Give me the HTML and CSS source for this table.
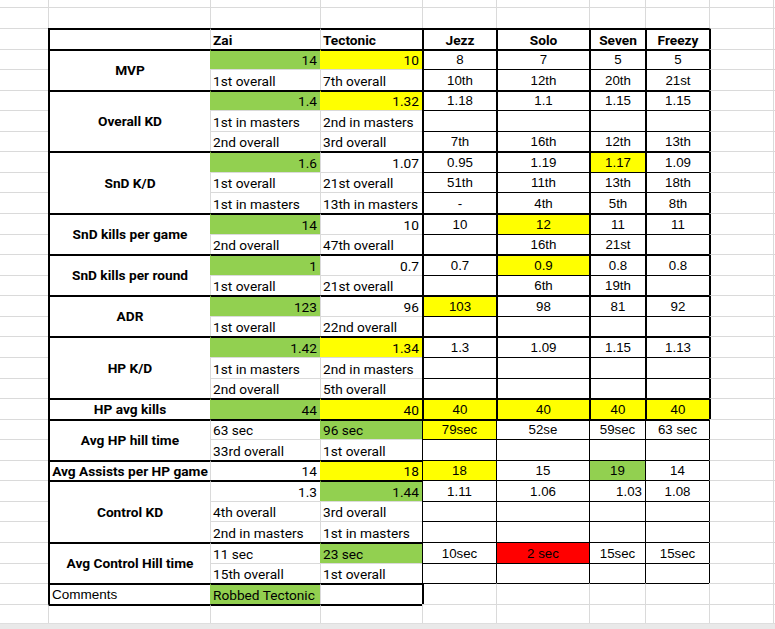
FILE: index.html
```html
<!DOCTYPE html>
<html lang="en">
<head>
<meta charset="utf-8">
<title>Player stats</title>
<link rel="stylesheet" href="styles.css">
</head>
<body>
<main class="sheet-wrap">
<table class="sheet">
<colgroup>
<col class="w-a"><col class="w-b"><col class="w-c"><col class="w-d"><col class="w-e"><col class="w-f"><col class="w-g"><col class="w-h"><col class="w-i"><col class="w-j">
</colgroup>
<tbody>
<tr class="r-top"><td class="o oa"></td><td class="o"></td><td class="o"></td><td class="o"></td><td class="o"></td><td class="o"></td><td class="o"></td><td class="o"></td><td class="o"></td><td class="o"></td></tr>
<tr><td class="o oa"></td><td class="o"></td><td class="o"></td><td class="o"></td><td class="o"></td><td class="o"></td><td class="o"></td><td class="o"></td><td class="o"></td><td class="o"></td></tr>

<tr class="gs">
<td class="o oa"></td>
<td class="lbl"></td>
<td class="p h">Zai</td>
<td class="p h">Tectonic</td>
<td class="q h">Jezz</td>
<td class="q h">Solo</td>
<td class="q h">Seven</td>
<td class="q h">Freezy</td>
<td class="o edge"></td><td class="o"></td>
</tr>

<tr class="gs">
<td class="o oa"></td>
<th class="lbl" rowspan="2" scope="rowgroup">MVP</th>
<td class="p n f green">14</td><td class="p n f yellow">10</td>
<td class="q">8</td><td class="q">7</td><td class="q">5</td><td class="q">5</td>
<td class="o edge"></td><td class="o"></td>
</tr>
<tr>
<td class="o oa"></td>
<td class="p">1st overall</td><td class="p">7th overall</td>
<td class="q">10th</td><td class="q">12th</td><td class="q">20th</td><td class="q">21st</td>
<td class="o edge"></td><td class="o"></td>
</tr>

<tr class="gs">
<td class="o oa"></td>
<th class="lbl" rowspan="3" scope="rowgroup">Overall KD</th>
<td class="p n f green">1.4</td><td class="p n f yellow">1.32</td>
<td class="q">1.18</td><td class="q">1.1</td><td class="q">1.15</td><td class="q">1.15</td>
<td class="o edge"></td><td class="o"></td>
</tr>
<tr>
<td class="o oa"></td>
<td class="p">1st in masters</td><td class="p">2nd in masters</td>
<td class="q"></td><td class="q"></td><td class="q"></td><td class="q"></td>
<td class="o edge"></td><td class="o"></td>
</tr>
<tr>
<td class="o oa"></td>
<td class="p">2nd overall</td><td class="p">3rd overall</td>
<td class="q">7th</td><td class="q">16th</td><td class="q">12th</td><td class="q">13th</td>
<td class="o edge"></td><td class="o"></td>
</tr>

<tr class="gs">
<td class="o oa"></td>
<th class="lbl" rowspan="3" scope="rowgroup">SnD K/D</th>
<td class="p n f green">1.6</td><td class="p n">1.07</td>
<td class="q">0.95</td><td class="q">1.19</td><td class="q yellow">1.17</td><td class="q">1.09</td>
<td class="o edge"></td><td class="o"></td>
</tr>
<tr>
<td class="o oa"></td>
<td class="p">1st overall</td><td class="p">21st overall</td>
<td class="q">51th</td><td class="q">11th</td><td class="q">13th</td><td class="q">18th</td>
<td class="o edge"></td><td class="o"></td>
</tr>
<tr>
<td class="o oa"></td>
<td class="p">1st in masters</td><td class="p">13th in masters</td>
<td class="q">-</td><td class="q">4th</td><td class="q">5th</td><td class="q">8th</td>
<td class="o edge"></td><td class="o"></td>
</tr>

<tr class="gs">
<td class="o oa"></td>
<th class="lbl" rowspan="2" scope="rowgroup">SnD kills per game</th>
<td class="p n f green">14</td><td class="p n">10</td>
<td class="q">10</td><td class="q yellow">12</td><td class="q">11</td><td class="q">11</td>
<td class="o edge"></td><td class="o"></td>
</tr>
<tr>
<td class="o oa"></td>
<td class="p">2nd overall</td><td class="p">47th overall</td>
<td class="q"></td><td class="q">16th</td><td class="q">21st</td><td class="q"></td>
<td class="o edge"></td><td class="o"></td>
</tr>

<tr class="gs">
<td class="o oa"></td>
<th class="lbl" rowspan="2" scope="rowgroup">SnD kills per round</th>
<td class="p n f green">1</td><td class="p n">0.7</td>
<td class="q">0.7</td><td class="q yellow">0.9</td><td class="q">0.8</td><td class="q">0.8</td>
<td class="o edge"></td><td class="o"></td>
</tr>
<tr>
<td class="o oa"></td>
<td class="p">1st overall</td><td class="p">21st overall</td>
<td class="q"></td><td class="q">6th</td><td class="q">19th</td><td class="q"></td>
<td class="o edge"></td><td class="o"></td>
</tr>

<tr class="gs">
<td class="o oa"></td>
<th class="lbl" rowspan="2" scope="rowgroup">ADR</th>
<td class="p n f green">123</td><td class="p n">96</td>
<td class="q yellow">103</td><td class="q">98</td><td class="q">81</td><td class="q">92</td>
<td class="o edge"></td><td class="o"></td>
</tr>
<tr>
<td class="o oa"></td>
<td class="p">1st overall</td><td class="p">22nd overall</td>
<td class="q"></td><td class="q"></td><td class="q"></td><td class="q"></td>
<td class="o edge"></td><td class="o"></td>
</tr>

<tr class="gs">
<td class="o oa"></td>
<th class="lbl" rowspan="3" scope="rowgroup">HP K/D</th>
<td class="p n f green">1.42</td><td class="p n f yellow">1.34</td>
<td class="q">1.3</td><td class="q">1.09</td><td class="q">1.15</td><td class="q">1.13</td>
<td class="o edge"></td><td class="o"></td>
</tr>
<tr>
<td class="o oa"></td>
<td class="p">1st in masters</td><td class="p">2nd in masters</td>
<td class="q"></td><td class="q"></td><td class="q"></td><td class="q"></td>
<td class="o edge"></td><td class="o"></td>
</tr>
<tr>
<td class="o oa"></td>
<td class="p">2nd overall</td><td class="p">5th overall</td>
<td class="q"></td><td class="q"></td><td class="q"></td><td class="q"></td>
<td class="o edge"></td><td class="o"></td>
</tr>

<tr class="gs">
<td class="o oa"></td>
<th class="lbl" scope="row">HP avg kills</th>
<td class="p n f green">44</td><td class="p n f yellow">40</td>
<td class="q yellow">40</td><td class="q yellow">40</td><td class="q yellow">40</td><td class="q yellow">40</td>
<td class="o edge"></td><td class="o"></td>
</tr>

<tr class="gs lo lo-first">
<td class="o oa"></td>
<th class="lbl" rowspan="2" scope="rowgroup">Avg HP hill time</th>
<td class="p">63 sec</td><td class="p f green">96 sec</td>
<td class="q yellow">79sec</td><td class="q">52se</td><td class="q">59sec</td><td class="q">63 sec</td>
<td class="o edge"></td><td class="o"></td>
</tr>
<tr class="lo">
<td class="o oa"></td>
<td class="p">33rd overall</td><td class="p">1st overall</td>
<td class="q"></td><td class="q"></td><td class="q"></td><td class="q"></td>
<td class="o edge"></td><td class="o"></td>
</tr>

<tr class="gs lo">
<td class="o oa"></td>
<th class="lbl" scope="row">Avg Assists per HP game</th>
<td class="p n">14</td><td class="p n f yellow">18</td>
<td class="q yellow">18</td><td class="q">15</td><td class="q green">19</td><td class="q">14</td>
<td class="o edge"></td><td class="o"></td>
</tr>

<tr class="gs lo">
<td class="o oa"></td>
<th class="lbl" rowspan="3" scope="rowgroup">Control KD</th>
<td class="p n">1.3</td><td class="p n f green">1.44</td>
<td class="q">1.11</td><td class="q">1.06</td><td class="q rt">1.03</td><td class="q">1.08</td>
<td class="o edge"></td><td class="o"></td>
</tr>
<tr class="lo">
<td class="o oa"></td>
<td class="p">4th overall</td><td class="p">3rd overall</td>
<td class="q"></td><td class="q"></td><td class="q"></td><td class="q"></td>
<td class="o edge"></td><td class="o"></td>
</tr>
<tr class="lo">
<td class="o oa"></td>
<td class="p">2nd in masters</td><td class="p">1st in masters</td>
<td class="q"></td><td class="q"></td><td class="q"></td><td class="q"></td>
<td class="o edge"></td><td class="o"></td>
</tr>

<tr class="gs lo">
<td class="o oa"></td>
<th class="lbl" rowspan="2" scope="rowgroup">Avg Control Hill time</th>
<td class="p">11 sec</td><td class="p f green">23 sec</td>
<td class="q">10sec</td><td class="q red">2 sec</td><td class="q">15sec</td><td class="q">15sec</td>
<td class="o edge"></td><td class="o"></td>
</tr>
<tr class="lo">
<td class="o oa"></td>
<td class="p">15th overall</td><td class="p">1st overall</td>
<td class="q"></td><td class="q"></td><td class="q"></td><td class="q"></td>
<td class="o edge"></td><td class="o"></td>
</tr>

<tr class="gs">
<td class="o oa"></td>
<th class="lbl note" scope="row">Comments</th>
<td class="p f green">Robbed Tectonic</td><td class="p"></td>
<td class="o cl edge"></td><td class="o cl"></td><td class="o cl"></td><td class="o cl"></td>
<td class="o"></td><td class="o"></td>
</tr>

<tr class="r-last">
<td class="o oa"></td><td class="o bt"></td><td class="o bt"></td><td class="o bt"></td><td class="o"></td><td class="o"></td><td class="o"></td><td class="o"></td><td class="o"></td><td class="o"></td>
</tr>
</tbody>
</table>
<div class="hscroll"></div>
</main>
</body>
</html>
```

FILE: styles.css
```css
:root {
  --grid: #dadada;
  --green: #92d050;
  --yellow: #ffff00;
  --red: #ff0000;
}

html, body {
  margin: 0;
  padding: 0;
  background: #fff;
  overflow: hidden;
}

body {
  font-family: Roboto, "Liberation Sans", Arial, sans-serif;
  color: #000;
}

.sheet-wrap {
  width: 775px;
  height: 629px;
  overflow: hidden;
  display: flex;
  flex-direction: column;
}

.sheet {
  flex: none;
  width: 837px;
  table-layout: fixed;
  border-collapse: separate;
  border-spacing: 0;
}

.w-a { width: 48px; }
.w-b { width: 162px; }
.w-c { width: 110px; }
.w-d { width: 102px; }
.w-e { width: 74px; }
.w-f { width: 93px; }
.w-g { width: 56px; }
.w-h { width: 64px; }
.w-i { width: 64px; }
.w-j { width: 64px; }

.sheet tr { height: 20.57px; }
.sheet tr.r-top { height: 7.43px; }
.sheet tr.r-last { height: 19px; }

.sheet td,
.sheet th {
  box-sizing: border-box;
  padding: 0 2px 1px;
  border: 0 solid #000;
  vertical-align: bottom;
  white-space: nowrap;
  overflow: visible;
  font-family: Roboto, "Liberation Sans", Arial, sans-serif;
  font-size: 13.7px;
  line-height: 16px;
  font-weight: 400;
  text-align: left;
}

/* plain spreadsheet cells with gridlines */
.sheet .o {
  padding: 0;
  border-left: 1px solid var(--grid);
  border-top: 1px solid var(--grid);
}
.sheet .r-top .o { border-top: 0; }
.sheet .oa { border-left: 0; }
.sheet .edge { border-left: 2px solid #000; }
.sheet .lo .edge { border-left-width: 1px; }
.sheet .cl { border-top: 1px solid #000; }
.sheet .bt { border-top: 2px solid #000; }

/* row labels */
.sheet .lbl {
  background: #fff;
  border-left: 2px solid #000;
  border-top: 2px solid #000;
  font-weight: 700;
  text-align: center;
  vertical-align: middle;
  padding: 0 1px 1px;
}
.sheet .note {
  font-family: "Liberation Sans", Arial, sans-serif;
  font-size: 13.5px;
  font-weight: 400;
  text-align: left;
  vertical-align: bottom;
  padding: 0 2px 1px;
}

/* Zai / Tectonic block */
.sheet .p {
  background: #fff;
  border-left: 1px solid var(--grid);
  border-top: 1px solid var(--grid);
}
.sheet .gs .p { border-top: 2px solid #000; }
.sheet .p.f { border-left-color: transparent; }
.sheet tr:not(.gs) .p.f { border-top-color: transparent; }
.sheet .n { text-align: right; padding-right: 3px; }

/* other players block */
.sheet .q {
  background: #fff;
  border-left: 2px solid #000;
  border-top: 1px solid #000;
  text-align: center;
  font-family: "Liberation Sans", Arial, sans-serif;
  font-size: 13.3px;
  padding-bottom: 1px;
}
.sheet .gs .q { border-top-width: 2px; }
.sheet .lo .q { border-left-width: 1px; border-top-width: 1px; }
.sheet .lo-first .q { border-top-width: 2px; }
.sheet .q.rt { text-align: right; padding-right: 3px; }

.sheet .h {
  font-family: Roboto, "Liberation Sans", Arial, sans-serif;
  font-size: 13.7px;
  font-weight: 700;
  padding-bottom: 1px;
}

.sheet .green { background: var(--green); }
.sheet .yellow { background: var(--yellow); }
.sheet .red { background: var(--red); }

.hscroll {
  flex: none;
  height: 6px;
  background: #e9e9e9;
  border-top: 1px solid #dedede;
}
```
